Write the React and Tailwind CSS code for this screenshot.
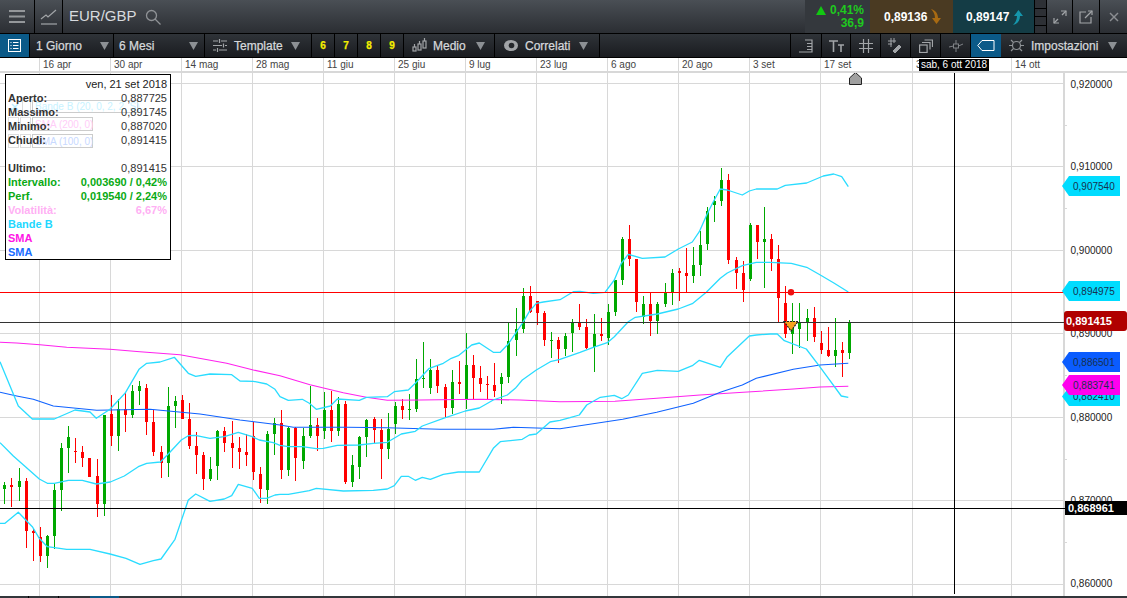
import React from 'react';

// candele: [stoppino alto, stoppino basso, corpo alto, corpo basso, 1 = verde], coordinate lette dal grafico a 3x
const candele1 = [
  [456,522,465,477,1],[444,531,465,471,0],[414,513,453,471,1],[444,654,453,603,0],[597,693,603,609,0],[591,696,621,678,0],
  [615,714,618,678,1],[462,657,480,618,1],[339,543,354,480,1],[288,429,321,354,1],[324,399,363,367,0],[348,411,366,384,0],
  [384,441,384,441,0],[387,561,438,522,0],[255,558,255,522,1],[195,348,252,318,0],[207,363,237,318,1],[189,306,238,255,0],
  [165,264,183,255,1],[153,225,168,183,1],[162,315,174,276,0],[240,378,276,366,0],[348,444,366,399,0],[171,441,228,399,1],
  [198,294,213,228,1],[195,267,210,267,0],[219,357,267,348,0],[306,432,348,375,0],[366,480,375,447,0],[381,453,417,447,1],
  [300,450,303,408,1],[291,366,303,339,0],[273,414,339,354,0],[321,417,354,366,0],[312,408,366,375,0],[276,450,318,426,0],
  [411,519,432,477,0],[303,522,312,480,1],[264,375,279,312,1],
];
const candele2 = [
  [420,627,460,600,0],[470,618,474,600,1],[470,633,474,564,0],[474,597,498,573,1],[348,504,465,498,1],[444,543,465,498,0],
  [366,507,420,483,1],[363,516,420,483,0],[381,498,402,483,1],[393,642,402,636,0],[555,651,585,636,1],[498,627,501,591,1],
  [447,561,450,501,1],[441,519,447,480,0],[447,627,480,537,0],[429,567,477,537,1],[396,492,408,462,1],[387,447,408,420,0],
  [372,450,417,420,1],[267,426,327,417,1],[216,354,324,327,1],[267,372,300,354,1],[285,369,300,348,0],[342,444,351,414,0],
  [300,432,336,414,1],[273,372,336,342,0],[189,417,285,390,1],[255,390,285,324,0],[288,366,324,342,0],[318,390,342,345,0],
  [279,381,345,363,0],[309,402,321,342,1],[159,339,213,321,1],[114,258,177,210,1],[54,189,78,177,1],[48,129,78,126,0],
  [93,165,93,129,0],[124,228,129,210,0],[186,264,210,213,1],[201,279,210,237,0],
];
const candele3 = [
  [519,588,528,567,1],[477,576,489,519,1],[432,510,489,501,0],[477,567,501,564,0],[462,636,522,561,1],[474,543,522,528,0],
  [432,555,456,534,1],[360,468,360,456,1],[231,375,237,360,1],[195,318,237,297,0],[297,456,297,426,0],[408,492,432,471,1],
  [397,528,432,483,0],[426,522,432,483,1],[369,441,399,432,1],[327,435,339,396,1],[324,423,333,339,0],[264,397,339,348,0],
  [261,369,315,348,1],[213,348,255,315,1],[141,270,153,252,1],[108,186,123,135,1],[24,138,60,123,1],[42,312,60,300,0],
  [292,387,300,339,0],[303,426,339,390,0],[189,363,195,357,1],[195,297,195,245,0],[141,384,237,245,1],[222,333,237,297,0],
  [255,486,297,414,0],[378,534,429,522,0],[429,582,483,522,1],[429,564,489,507,1],[447,543,474,486,1],[441,546,474,531,0],
  [513,582,549,570,0],[501,591,570,588,0],[474,621,570,588,1],[546,651,570,579,0],[480,597,489,579,1],
];
const candele = [
  ...candele1.map((c) => ({ c, off: 330 })),
  ...candele2.map((c) => ({ c, off: 270 })),
  ...candele3.map((c) => ({ c, off: 160 })),
];

const tratto = (pts, ox, oy) => pts.map(([x, y]) => `${(x / 3 + ox).toFixed(1)},${(y / 3 + oy).toFixed(1)}`).join(' ');
const linea = (a, b, c) => [tratto(a, 0, 330), tratto(b, 280, 270), tratto(c, 560, 160)].join(' ');

const bandaAlta = linea(
  [[0,95],[55,228],[97,267],[163,267],[225,240],[270,246],[289,265],[330,238],[375,190],[417,118],[440,100],[480,96],[523,82],[565,130],[587,139],[630,132],[695,134],[720,153],[760,154],[800,162],[825,178],[840,200]],
  [[25,391],[67,388],[88,400],[109,418],[151,408],[172,387],[238,391],[259,382],[322,380],[343,365],[385,360],[406,340],[448,295],[490,280],[514,265],[535,257],[575,225],[598,219],[640,247],[661,247],[685,222],[727,160],[748,125],[769,100],[790,96],[840,89]],
  [[40,395],[60,394],[100,400],[135,397],[163,360],[184,310],[205,283],[247,295],[315,291],[355,267],[397,246],[418,215],[440,165],[460,125],[481,87],[502,90],[547,105],[568,93],[589,87],[652,87],[676,76],[740,69],[790,48],[821,42],[845,50],[865,80]],
);
const bandaMedia = linea(
  [[0,338],[40,378],[118,447],[142,460],[163,460],[205,451],[247,451],[289,462],[331,456],[373,438],[415,410],[440,400],[481,396],[502,375],[544,330],[565,317],[586,316],[630,325],[673,320],[715,307],[757,320],[778,330],[820,338],[840,346]],
  [[25,530],[67,530],[109,536],[130,535],[172,526],[238,525],[280,520],[322,517],[364,492],[406,484],[427,468],[490,445],[556,423],[598,414],[640,390],[682,375],[706,355],[727,330],[769,300],[811,275],[840,268]],
  [[60,577],[100,562],[142,548],[163,530],[205,485],[226,472],[292,462],[355,447],[397,431],[439,397],[481,355],[502,339],[547,317],[589,307],[631,307],[694,310],[740,322],[781,345],[823,370],[865,396]],
);
const bandaBassa = linea(
  [[0,580],[15,580],[55,547],[97,590],[118,625],[142,650],[200,658],[270,658],[330,672],[378,685],[420,703],[460,692],[483,687],[525,628],[565,510],[587,492],[630,514],[673,507],[695,497],[715,463],[757,475],[778,505],[800,505],[825,495],[840,493]],
  [[25,673],[88,662],[109,655],[190,663],[280,661],[322,657],[343,647],[364,619],[385,619],[406,631],[427,622],[451,628],[490,613],[535,606],[598,606],[640,535],[661,515],[727,508],[748,495],[769,492],[810,456],[840,451]],
  [[30,773],[58,765],[80,735],[121,712],[163,706],[185,716],[205,705],[247,640],[292,631],[355,634],[397,617],[418,601],[481,622],[502,590],[568,528],[589,525],[631,522],[652,522],[673,542],[739,567],[781,622],[844,708],[865,712]],
);
const sma200 = linea(
  [[0,37],[50,39],[120,44],[200,52],[330,58],[420,65],[540,74],[680,100],[760,120],[840,137]],
  [[90,344],[190,368],[259,382],[322,391],[420,390],[600,388],[720,390],[840,395]],
  [[165,724],[290,715],[420,705],[550,697],[700,687],[780,681],[865,679]],
);
const sma100 = linea(
  [[0,187],[50,198],[100,208],[160,228],[290,241],[450,238],[600,252],[720,270],[840,285]],
  [[40,472],[200,472],[320,473],[480,478],[640,478],[700,472],[840,476]],
  [[188,778],[290,757],[400,730],[481,697],[547,675],[589,655],[700,628],[780,615],[865,610]],
);

const griglieY = [83.5, 166.5, 250.5, 333.5, 417.5, 500.5, 584.5];
const griglieX = [39, 110, 181, 252, 323, 394, 465, 536, 607, 678, 749, 820, 912, 1011];
const prezzi = [[84, '0,920000'], [166, '0,910000'], [250, '0,900000'], [333, '0,890000'], [417, '0,880000'], [500, '0,870000'], [583, '0,860000']];

const date = [
  ['16 apr', 71], ['30 apr', 71], ['14 mag', 71], ['28 mag', 71], ['11 giu', 71], ['25 giu', 71], ['9 lug', 71], ['23 lug', 71],
  ['6 ago', 71], ['20 ago', 71], ['3 set', 71], ['17 set', 92], ['3 ott', 99], ['14 ott', 53],
];

const etichette = [
  { y: 176, h: 20, bg: '#00dcff', t: '0,907540' },
  { y: 281, h: 20, bg: '#00dcff', t: '0,894975' },
  { y: 352, h: 20, bg: '#0a5cff', t: '0,886501' },
  { y: 387, h: 19, bg: '#00dcff', t: '0,882410' },
  { y: 375, h: 20, bg: '#ff00ee', t: '0,883741' },
];

const Triangolino = () => (
  <svg width="9" height="8" viewBox="0 0 9 8"><polygon points="0,0 9,0 4.5,8" fill="#8c9094" /></svg>
);

const VoceMenu = ({ className, children }) => (
  <div className={`flex h-full shrink-0 items-center border-r border-black ${className}`}>{children}</div>
);

const Icona = ({ children, w = 16, h = 16 }) => (
  <svg width={w} height={h} viewBox={`0 0 ${w} ${h}`} fill="none" stroke="#a2a5a8" strokeWidth="1.2">{children}</svg>
);

const RigaDati = ({ label, val, cls = 'text-[#333]', valCls = 'font-normal' }) => (
  <div className={`flex h-[14px] justify-between font-bold leading-[14px] ${cls}`}>
    <span>{label}</span>
    <span className={valCls}>{val}</span>
  </div>
);

const Legenda = () => (
  <div className="absolute left-[5px] top-[1px] h-[186px] w-[166px] border border-black bg-white pl-[2px] pr-[3px] pt-[2px] text-[11px]">
    <div className="absolute left-[26px] top-[25px] flex h-[13px] w-[106px] items-center whitespace-nowrap border border-[#ccc] pl-[2px] text-[10px] text-[#c8f2ff]">Bande B (20, 0, 2, 2, S)</div>
    <svg className="absolute left-[5px] top-[28px]" width="8" height="8" viewBox="0 0 8 8" stroke="#bfefff" strokeWidth="1.5"><path d="M1 1l6 6M7 1L1 7" /></svg>
    <div className="absolute left-[16px] top-[25px] h-[13px] w-[9px] border border-[#ddd]"></div>
    <div className="absolute left-[26px] top-[42px] flex h-[14px] w-[61px] items-center whitespace-nowrap border border-[#ccc] pl-[2px] text-[10px] text-[#ffcdf8]">SMA (200, 0)</div>
    <div className="absolute left-[2px] top-[42px] h-[14px] w-[11px] border border-[#ddd]"></div>
    <div className="absolute left-[14px] top-[42px] h-[14px] w-[11px] border border-[#ddd]"></div>
    <div className="absolute left-[26px] top-[59px] flex h-[14px] w-[61px] items-center whitespace-nowrap border border-[#ccc] pl-[2px] text-[10px] text-[#c8d9ff]">SMA (100, 0)</div>
    <div className="absolute left-[2px] top-[59px] h-[14px] w-[11px] border border-[#ddd]"></div>
    <div className="absolute left-[14px] top-[59px] h-[14px] w-[11px] border border-[#ddd]"></div>
    <div className="relative">
      <div className="h-[14px] text-right leading-[14px] text-[#222]">ven, 21 set 2018</div>
      <RigaDati label="Aperto:" val="0,887725" />
      <RigaDati label="Massimo:" val="0,891745" />
      <RigaDati label="Minimo:" val="0,887020" />
      <RigaDati label="Chiudi:" val="0,891415" />
      <div className="h-[14px]"></div>
      <RigaDati label="Ultimo:" val="0,891415" />
      <RigaDati label="Intervallo:" val="0,003690 / 0,42%" cls="text-[#0aaa14]" valCls="font-bold" />
      <RigaDati label="Perf." val="0,019540 / 2,24%" cls="text-[#0aaa14]" valCls="font-bold" />
      <RigaDati label="Volatilità:" val="6,67%" cls="text-[#ffb0f4]" valCls="font-bold" />
      <div className="h-[14px] font-bold leading-[14px] text-[#22d8ff]">Bande B</div>
      <div className="h-[14px] font-bold leading-[14px] text-[#ff14e6]">SMA</div>
      <div className="h-[14px] font-bold leading-[14px] text-[#1a6cff]">SMA</div>
    </div>
  </div>
);

const Grafico = () => (
  <svg width="1127" height="523" viewBox="0 73 1127 523" className="block">
    <g fill="#d8d8d8" shapeRendering="crispEdges">
      {griglieY.map((y) => <rect key={y} x="0" y={y - 0.5} width="1064" height="1" />)}
      {griglieX.map((x) => <rect key={x} x={x} y="73" width="1" height="523" />)}
      <rect x="1063" y="73" width="2" height="523" />
      {[125, 208, 292, 375, 459, 542].map((y) => <rect key={y} x="1065" y={y} width="2" height="1" />)}
    </g>
    <g shapeRendering="crispEdges">
      {candele.map(({ c, off }, i) => {
        const x = Math.round(4.3 + 7.1 * i);
        const colore = c[4] ? '#00a800' : '#ff0000';
        const corpo = Math.max((c[3] - c[2]) / 3, 1);
        return (
          <g key={i} fill={colore}>
            <rect x={x} y={c[0] / 3 + off} width="1" height={(c[1] - c[0]) / 3} />
            <rect x={x - 1} y={c[2] / 3 + off} width="3" height={corpo} />
          </g>
        );
      })}
    </g>
    <g fill="none" strokeLinejoin="round">
      <polyline points={sma200} stroke="#ff22ee" strokeWidth="1.1" />
      <polyline points={sma100} stroke="#0f62ff" strokeWidth="1.1" />
      <polyline points={bandaAlta} stroke="#2adcff" strokeWidth="1.3" />
      <polyline points={bandaMedia} stroke="#2adcff" strokeWidth="1.3" />
      <polyline points={bandaBassa} stroke="#2adcff" strokeWidth="1.3" />
    </g>
    <g shapeRendering="crispEdges">
      <rect x="0" y="292" width="1064" height="1" fill="#ff0000" />
      <rect x="0" y="322" width="1064" height="1" fill="#333" />
      <rect x="0" y="508" width="1127" height="1" fill="#000" />
      <rect x="954" y="73" width="1" height="521" fill="#000" />
    </g>
    <circle cx="791" cy="292.3" r="3.2" fill="#f01010" />
    <polygon points="784,321.5 798,321.5 791,331" fill="#f6a21e" stroke="#222" strokeWidth="1.2" strokeDasharray="2 1" />
    <polygon points="849.5,84.5 849.5,78 855.5,72.5 861.5,78 861.5,84.5" fill="#a0a0a0" stroke="#222" />
    <g fontSize="10" fill="#222">
      {prezzi.map(([y, t]) => <text key={t} x="1070.5" y={y + 3.5}>{t}</text>)}
    </g>
    {etichette.map((e) => (
      <g key={e.t}>
        <polygon points={`1062,${e.y + e.h / 2} 1069,${e.y} 1120,${e.y} 1120,${e.y + e.h} 1069,${e.y + e.h}`} fill={e.bg} />
        <text x="1073" y={e.y + e.h / 2 + 3.5} fontSize="10" fill="#17314f">{e.t}</text>
      </g>
    ))}
    <rect x="1064" y="311" width="63" height="20" rx="3" fill="#b00000" />
    <text x="1066" y="325" fontSize="11" fontWeight="700" fill="#fff">0,891415</text>
    <rect x="1065" y="501" width="62" height="14" fill="#000" />
    <text x="1068" y="512" fontSize="11" fontWeight="700" fill="#fff">0,868961</text>
  </svg>
);

export default function App() {
  return (
    <div className="flex h-[598px] w-[1127px] flex-col overflow-hidden bg-white font-['Liberation_Sans',Arial,sans-serif]">
      {/* barra superiore */}
      <div className="flex h-[33px] items-stretch bg-gradient-to-b from-[#4a4f55] to-[#2b2e33]">
        <div className="flex w-[35px] items-center justify-center border-r border-black">
          <svg width="16" height="13" viewBox="0 0 16 13" fill="#94979a"><rect width="16" height="2" /><rect y="5.5" width="16" height="2" /><rect y="11" width="16" height="2" /></svg>
        </div>
        <div className="flex w-[28px] items-center justify-center border-r border-black">
          <Icona w={18} h={18}>
            <polyline points="1,11 6,7 8,9 16,2" />
            <line x1="1" y1="16" x2="17" y2="16" />
          </Icona>
        </div>
        <div className="flex flex-1 items-center pl-[6px] text-[15px] text-[#d8dbde]">
          EUR/GBP
          <svg className="ml-[8px]" width="16" height="16" viewBox="0 0 16 16" fill="none" stroke="#8f9296" strokeWidth="1.3"><circle cx="6.5" cy="6.5" r="5" /><line x1="10" y1="10" x2="15.5" y2="15.5" /></svg>
        </div>
        <div className="flex w-[65px] flex-col items-end justify-center bg-[#34383d] pr-[6px] text-[12px] font-bold leading-[13px] text-[#1fc81f]">
          <div className="flex items-center gap-[4px]">
            <svg width="10" height="9" viewBox="0 0 10 9"><polygon points="0,9 10,9 5,0" fill="#12c812" /></svg>
            0,41%
          </div>
          <div>36,9</div>
        </div>
        <div className="flex w-[83px] items-center bg-[#4a3a22] pl-[14px] text-[12px] font-bold text-white">
          0,89136
          <svg className="ml-[3px]" width="12" height="16" viewBox="0 0 12 16"><path d="M1 0C5 1 8 4 8 9L11 9 6.5 15 2 9 5 9C5 5 3 2 1 0Z" fill="#a86a12" /></svg>
        </div>
        <div className="flex w-[81px] items-center bg-[#143c45] pl-[13px] text-[12px] font-bold text-white">
          0,89147
          <svg className="ml-[3px]" width="12" height="16" viewBox="0 0 12 16"><path d="M1 16C5 15 8 12 8 7L11 7 6.5 1 2 7 5 7C5 11 3 14 1 16Z" fill="#1596ac" /></svg>
        </div>
        <div className="flex w-[13px] flex-col gap-[1px] border-x border-black bg-black">
          <div className="flex-1 bg-[#2d3035]"></div>
          <div className="flex-1 bg-[#2d3035]"></div>
          <div className="flex-1 bg-[#2d3035]"></div>
          <div className="flex-1 bg-[#2d3035]"></div>
        </div>
        <div className="flex w-[26px] items-center justify-center border-r border-black">
          <Icona w={14} h={14}>
            <polyline points="8,1 13,1 13,6" /><line x1="13" y1="1" x2="9" y2="5" />
            <polyline points="1,8 1,13 6,13" /><line x1="1" y1="13" x2="5" y2="9" />
          </Icona>
        </div>
        <div className="flex w-[27px] items-center justify-center border-r border-black">
          <Icona w={14} h={14}>
            <polyline points="7,2 1,2 1,13 12,13 12,7" /><line x1="6" y1="8" x2="13" y2="1" /><polyline points="9,1 13,1 13,5" />
          </Icona>
        </div>
        <div className="flex w-[27px] items-center justify-center">
          <svg width="10" height="10" viewBox="0 0 10 10" stroke="#8b8e92" strokeWidth="1.4"><line x1="1" y1="1" x2="9" y2="9" /><line x1="9" y1="1" x2="1" y2="9" /></svg>
        </div>
      </div>

      {/* barra strumenti */}
      <div className="flex h-[25px] items-stretch border-y border-black bg-gradient-to-b from-[#2f3338] to-[#1a1c20] text-[12px] text-[#d5d8db] [-webkit-text-stroke:0.25px]">
        <div className="flex w-[29px] shrink-0 items-center justify-center bg-[#0b5a88]">
          <svg width="13" height="13" viewBox="0 0 13 13" fill="none" stroke="#fff"><rect x=".5" y=".5" width="12" height="12" /><path d="M2.5 3.5h1M5 3.5h5.5M2.5 6.5h1M5 6.5h5.5M2.5 9.5h1M5 9.5h5.5" /></svg>
        </div>
        <VoceMenu className="w-[85px] border-l pl-[6px]"><span className="flex-1">1 Giorno</span><span className="mr-[4px] flex"><Triangolino /></span></VoceMenu>
        <VoceMenu className="w-[91px] pl-[5px]"><span className="flex-1">6 Mesi</span><span className="mr-[6px] flex"><Triangolino /></span></VoceMenu>
        <VoceMenu className="w-[107px] pl-[8px]">
          <Icona w={14} h={13}><path d="M0 2h5M8 2h6M0 6.5h9M12 6.5h2M0 11h3M6 11h8M6.5 0v4M10.5 4.5v4M4.5 9v4" /></Icona>
          <span className="ml-[7px] flex-1">Template</span><span className="mr-[11px] flex"><Triangolino /></span>
        </VoceMenu>
        {['6', '7', '8', '9'].map((n) => (
          <VoceMenu key={n} className="w-[23px] justify-center text-[10px] font-bold text-[#f5ef00]">{n}</VoceMenu>
        ))}
        <VoceMenu className="w-[91px] pl-[8px]">
          <Icona w={15} h={15}><rect x="1" y="9" width="3" height="4" /><rect x="6" y="6" width="3" height="6" /><rect x="11" y="3" width="3" height="7" /><path d="M2.5 6v3M7.5 3v3M12.5 0v3" /></Icona>
          <span className="ml-[6px] flex-1">Medio</span><span className="mr-[9px] flex"><Triangolino /></span>
        </VoceMenu>
        <VoceMenu className="w-[105px] pl-[9px]">
          <svg width="14" height="11" viewBox="0 0 14 11"><ellipse cx="7" cy="5.5" rx="7" ry="5.5" fill="#a2a5a8" /><circle cx="7.5" cy="5.5" r="2.8" fill="#25282c" /></svg>
          <span className="ml-[7px] flex-1">Correlati</span><span className="mr-[11px] flex"><Triangolino /></span>
        </VoceMenu>
        <div className="flex-1 border-r border-black"></div>
        <VoceMenu className="w-[31px] justify-center">
          <Icona w={14} h={14}><path d="M6 1h7v12H0M8 4.5h5M8 7.5h5M8 10.5h5" /></Icona>
        </VoceMenu>
        <VoceMenu className="w-[29px] justify-center">
          <svg width="15" height="12" viewBox="0 0 15 12" fill="none" stroke="#a2a5a8" strokeWidth="1.6"><path d="M0 1h9M4.5 1v11M9 5h6M12 5v7" /></svg>
        </VoceMenu>
        <VoceMenu className="w-[30px] justify-center">
          <Icona w={14} h={14}><path d="M4.5 0v14M9.5 0v14M0 4.5h14M0 9.5h14" /></Icona>
        </VoceMenu>
        <VoceMenu className="w-[30px] justify-center">
          <svg width="15" height="15" viewBox="0 0 15 15" fill="none" stroke="#a2a5a8"><path d="M3 0v9M6 0v5M0 3h8M0 6h4" /><path d="M5 13l6-6 2 2-6 6z" fill="#a2a5a8" /></svg>
        </VoceMenu>
        <VoceMenu className="w-[30px] justify-center">
          <svg width="14" height="14" viewBox="0 0 14 14" fill="none" stroke="#a2a5a8" strokeWidth="1.2"><rect x=".6" y="6" width="7.5" height="7.5" /><path d="M3 3.5h8v7M5.500 1h8v7" /></svg>
        </VoceMenu>
        <VoceMenu className="w-[30px] justify-center">
          <svg width="14" height="14" viewBox="0 0 14 14" fill="none" stroke="#7f8286"><rect x="4.5" y="5" width="5" height="4" /><path d="M7 1v4M7 9v4M0 8l4.5-1M9.5 7L14 5" /></svg>
        </VoceMenu>
        <div className="flex w-[30px] shrink-0 items-center justify-center bg-[#0b5a88]">
          <svg width="18" height="11" viewBox="0 0 18 11" fill="none" stroke="#fff"><path d="M17 .5H5L.8 5.5 5 10.5h12z" /></svg>
        </div>
        <div className="flex w-[126px] shrink-0 items-center pl-[8px]">
          <svg width="15" height="15" viewBox="0 0 15 15" fill="none" stroke="#8f9296" strokeWidth="1.2"><circle cx="7.5" cy="7.5" r="4" /><path d="M4.5 4.5L2 2M10.5 4.5L13 2M4.5 10.5L2 13M10.5 10.5L13 13M0 7.5h3.5M11.5 7.5H15" /></svg>
          <span className="ml-[7px] flex-1">Impostazioni</span><span className="mr-[10px] flex"><Triangolino /></span>
        </div>
      </div>

      {/* asse delle date */}
      <div className="relative flex h-[15px] border-b-2 border-[#d8d8d8] pl-[39px] text-[10px] leading-[13px] text-[#444]">
        {date.map(([d, w]) => (
          <div key={d} className="border-l border-[#d8d8d8] pl-[3px]" style={{ width: w }}>{d}</div>
        ))}
        <div className="absolute left-[919px] top-[1px] h-[12px] w-[70px] bg-black text-center text-[10px] leading-[12px] text-white">sab, 6 ott 2018</div>
      </div>

      {/* grafico */}
      <div className="relative flex-1">
        <Grafico />
        <Legenda />
      </div>

      {/* linguette in basso */}
      <div className="flex h-[2px] shrink-0 bg-[#33373b]">
        <div className="w-[29px] border-r border-black"></div>
        <div className="w-[30px] border-r border-black"></div>
        <div className="w-[31px]"></div>
        <div className="w-[29px] bg-[#0b5a88]"></div>
      </div>
    </div>
  );
}
